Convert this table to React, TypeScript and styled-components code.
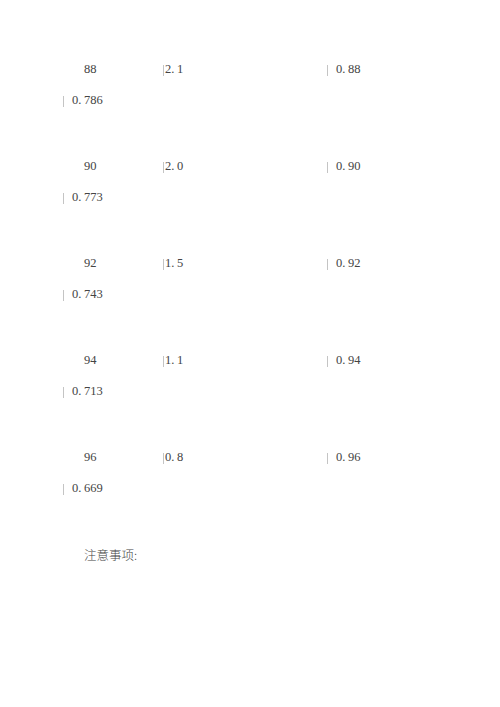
import styled, { createGlobalStyle } from "styled-components";

const GlobalStyle = createGlobalStyle`
  html, body {
    margin: 0;
    padding: 0;
    background: #fff;
  }
  body {
    font-family: "Liberation Serif", "Noto Sans CJK SC", serif;
    font-size: 12.5px;
    color: #444;
  }
`;

interface IRow {
  value: string;
  factor: string;
  ratio: string;
  result: string;
}

const rows: IRow[] = [
  { value: "88", factor: "2.1", ratio: "0.88", result: "0.786" },
  { value: "90", factor: "2.0", ratio: "0.90", result: "0.773" },
  { value: "92", factor: "1.5", ratio: "0.92", result: "0.743" },
  { value: "94", factor: "1.1", ratio: "0.94", result: "0.713" },
  { value: "96", factor: "0.8", ratio: "0.96", result: "0.669" },
];

// the source font draws the decimal point as wide as a digit
const Num = ({ text }: { text: string }) => {
  const [head, tail] = text.split(".");
  if (tail === undefined) return <Value>{text}</Value>;
  return (
    <Value>
      {head}
      <Dot>.</Dot>
      {tail}
    </Value>
  );
};

const App = () => {
  return (
    <>
      <GlobalStyle />
      <Page>
        {rows.map((row) => (
          <Group key={row.value}>
            <Line>
              <First>{row.value}</First>
              <Cell $left={100} $gap={1}>
                <Bar />
                <Num text={row.factor} />
              </Cell>
              <Cell $left={264} $gap={8}>
                <Bar />
                <Num text={row.ratio} />
              </Cell>
            </Line>
            <Line>
              <Cell $left={0} $gap={8}>
                <Bar />
                <Num text={row.result} />
              </Cell>
            </Line>
          </Group>
        ))}
        <Note>注意事项:</Note>
      </Page>
    </>
  );
};

const Page = styled.div`
  padding: 54px 0 0 63px;
  width: 437px;
  min-height: 653px;
`;

const Group = styled.div`
  margin-bottom: 35px;
`;

const Line = styled.div`
  position: relative;
  height: 31px;
  line-height: 31px;
  display: flex;
  align-items: center;
`;

const First = styled.span`
  position: absolute;
  left: 21px;
`;

const Cell = styled.span<{ $left: number; $gap: number }>`
  position: absolute;
  left: ${(p) => p.$left}px;
  display: flex;
  align-items: center;
  gap: ${(p) => p.$gap}px;
`;

const Value = styled.span`
  white-space: nowrap;
`;

const Bar = styled.i`
  display: inline-block;
  width: 1px;
  height: 11px;
  margin-top: 2px;
  background: #c4c4c4;
`;

const Dot = styled.span`
  margin-right: 2.5px;
`;

const Note = styled.div`
  padding-left: 21px;
  height: 31px;
  line-height: 31px;
  font-family: "Noto Sans CJK SC", sans-serif;
  font-weight: 300;
  font-size: 12.5px;
`;

export default App;
